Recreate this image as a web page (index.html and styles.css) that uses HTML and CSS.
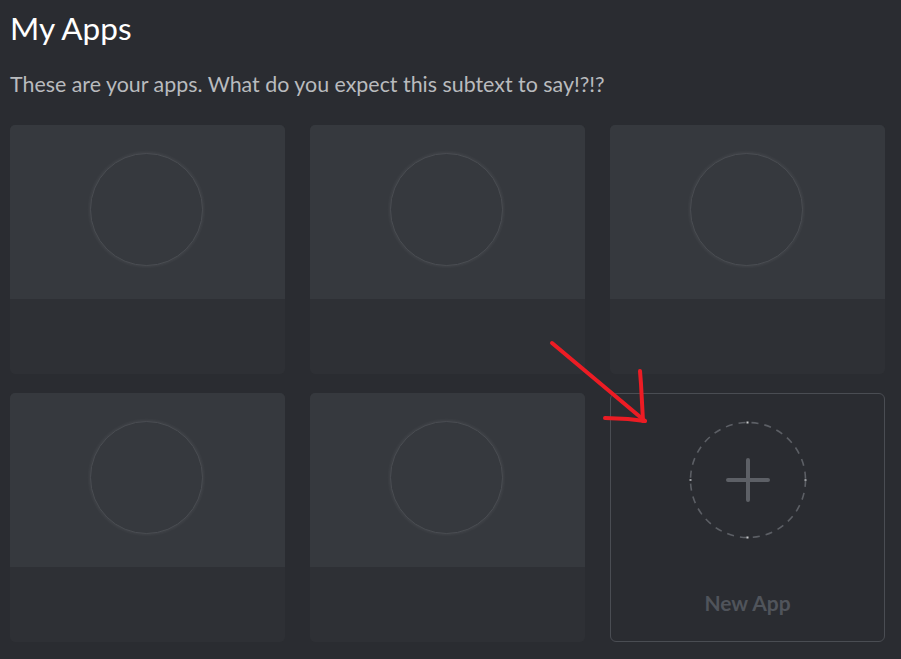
FILE: index.html
```html
<!DOCTYPE html>
<html>
<head>
<meta charset="utf-8">
<link rel="stylesheet" href="styles.css">
</head>
<body>
<main class="page">
  <h1 class="title">My Apps</h1>
  <p class="subtitle">These are your apps. What do you expect this subtext to say!?!?</p>
  <div class="grid">
    <div class="card"><div class="card-top"><div class="avatar"></div></div><div class="card-bottom"></div></div>
    <div class="card"><div class="card-top"><div class="avatar"></div></div><div class="card-bottom"></div></div>
    <div class="card"><div class="card-top"><div class="avatar"></div></div><div class="card-bottom"></div></div>
    <div class="card"><div class="card-top"><div class="avatar"></div></div><div class="card-bottom"></div></div>
    <div class="card"><div class="card-top"><div class="avatar"></div></div><div class="card-bottom"></div></div>
    <div class="new-card">
      <svg class="new-icon" width="118" height="118" viewBox="0 0 118 118">
        <circle cx="59" cy="59" r="57.5" fill="none" stroke="#5c5f65" stroke-width="1.6" stroke-dasharray="7 6.05"/>
        <rect x="57.5" y="0.5" width="2" height="2" fill="#c8c9cc"/>
        <rect x="57.5" y="115.5" width="2" height="2" fill="#c8c9cc"/>
        <rect x="0.5" y="58" width="2" height="2" fill="#9a9ca0"/>
        <rect x="115.5" y="58" width="2" height="2" fill="#9a9ca0"/>
        <path d="M59 39 V79 M39 59 H79" stroke="#5d6066" stroke-width="4" stroke-linecap="round"/>
      </svg>
      <div class="new-label">New App</div>
    </div>
  </div>
</main>
<svg class="arrow" width="901" height="659" viewBox="0 0 901 659">
  <g fill="none" stroke="#ec1c24" stroke-width="4" stroke-linecap="round" stroke-linejoin="round">
    <path d="M552 343 L645 421"/>
    <path d="M640 371 L641 384 L643 421"/>
    <path d="M605 418 L628 419 L645 421"/>
  </g>
</svg>
</body>
</html>
```

FILE: styles.css
```css
html, body {
  margin: 0;
  padding: 0;
  background: #2a2c31;
}
body {
  width: 901px;
  height: 659px;
  overflow: hidden;
  position: relative;
  font-family: Lato, "Open Sans", "Liberation Sans", sans-serif;
}
.page {
  padding: 8px 10px 0 10px;
}
.title {
  margin: 0;
  font-size: 31.5px;
  font-weight: 400;
  line-height: 40px;
  color: #ffffff;
}
.subtitle {
  margin: 24px 0 0 0;
  font-size: 21.4px;
  line-height: 24px;
  color: #b9bbbe;
}
.grid {
  margin-top: 29px;
  display: grid;
  grid-template-columns: repeat(3, 275px);
  grid-auto-rows: 249px;
  column-gap: 25px;
  row-gap: 19px;
}
.card {
  border-radius: 5px;
  overflow: hidden;
  display: flex;
  flex-direction: column;
  background: #2e3035;
}
.card-top {
  height: 174px;
  background: #36393e;
  display: flex;
  justify-content: center;
  padding-top: 28px;
  padding-right: 3px;
  box-sizing: border-box;
}
.avatar {
  width: 113px;
  height: 113px;
  border-radius: 50%;
  box-sizing: border-box;
  border: 1px solid #4a4d52;
  box-shadow: 0 0 3px 1px rgba(255, 255, 255, 0.06);
  background: #36393e;
}
.card-bottom {
  flex: 1;
}
.new-card {
  box-sizing: border-box;
  width: 275px;
  height: 249px;
  border: 1px solid #4a4d53;
  border-radius: 6px;
  display: flex;
  flex-direction: column;
  align-items: center;
  padding-top: 27px;
}
.new-label {
  margin-top: 52px;
  font-size: 21px;
  font-weight: 700;
  color: #50545b;
  line-height: 24px;
}
.arrow {
  position: absolute;
  left: 0;
  top: 0;
  pointer-events: none;
}
```
